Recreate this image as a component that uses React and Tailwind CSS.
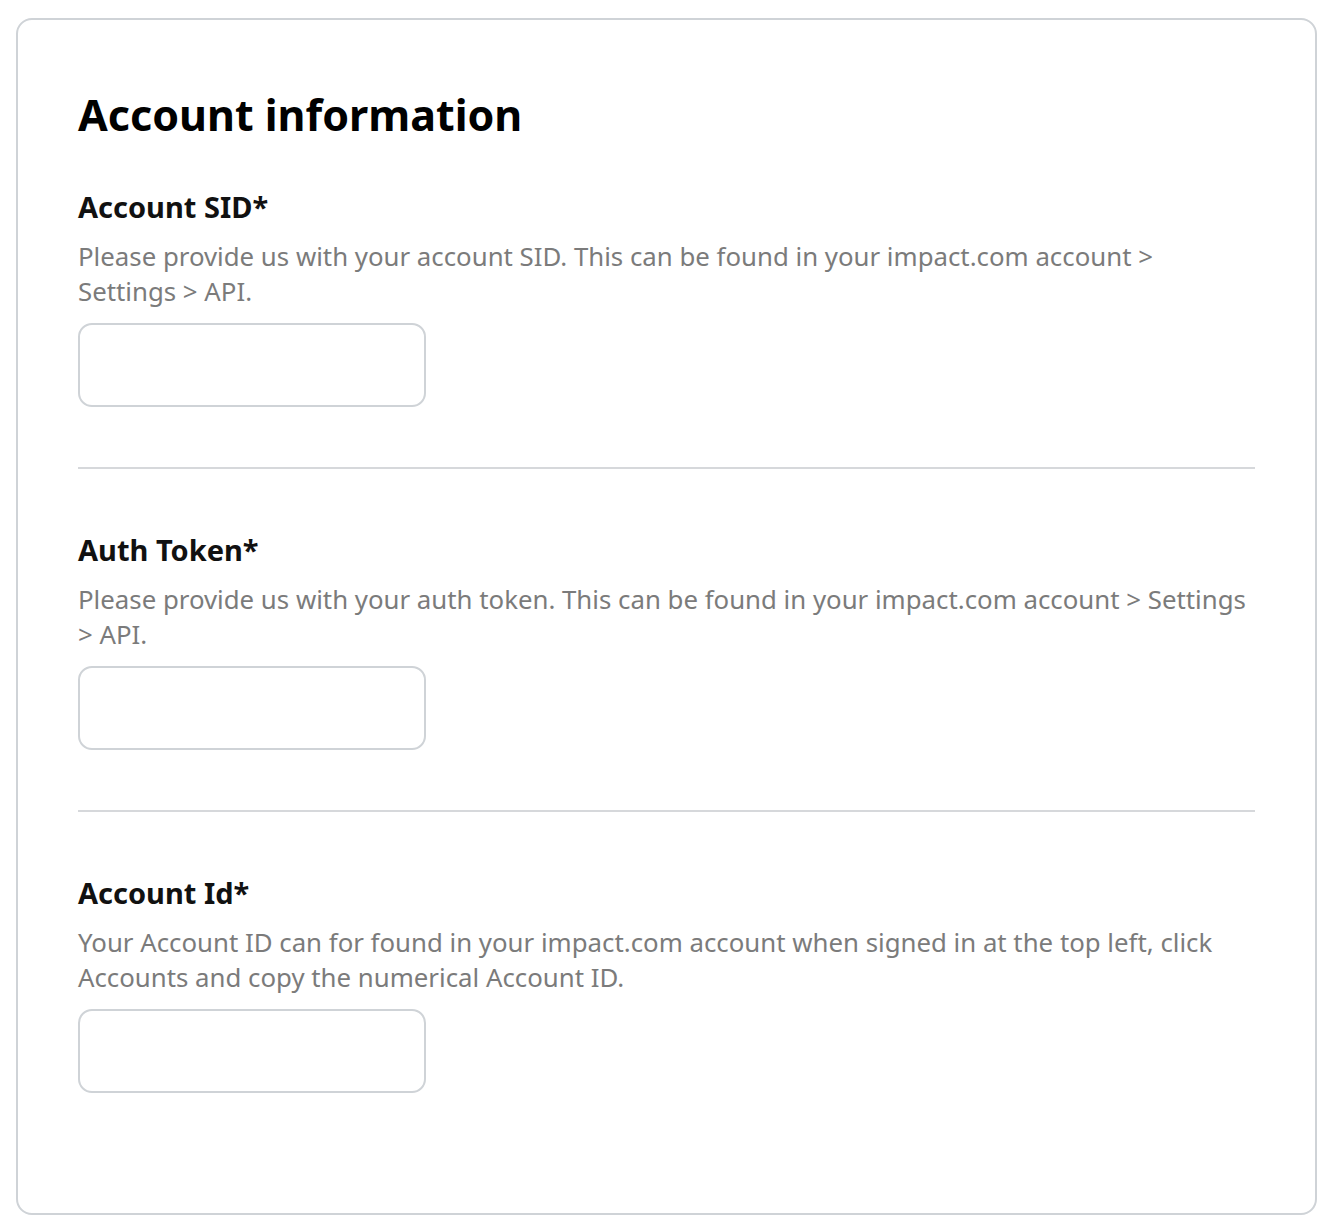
import React from 'react'

const fields = [
    {
        label: 'Account SID*',
        help: [
            'Please provide us with your account SID. This can be found in your impact.com account >',
            'Settings > API.',
        ],
    },
    {
        label: 'Auth Token*',
        help: [
            'Please provide us with your auth token. This can be found in your impact.com account > Settings',
            '> API.',
        ],
    },
    {
        label: 'Account Id*',
        help: [
            'Your Account ID can for found in your impact.com account when signed in at the top left, click',
            'Accounts and copy the numerical Account ID.',
        ],
    },
]

function Field({ label, help, first }) {
    return (
        <div className={first ? 'pb-[60px]' : 'pt-[63px] pb-[60px]'}>
            <div className="text-[29px] leading-[36px] font-bold text-[#111]">{label}</div>
            <p className="mt-[14px] text-[25.8px] leading-[35px] text-[#7b7b7b] whitespace-nowrap">
                {help.map((line, i) => (
                    <span key={i} className="block">{line}</span>
                ))}
            </p>
            <input
                type="text"
                className="mt-[14px] block w-[348px] h-[84px] border-2 border-[#cfd3d7] rounded-[14px] bg-white outline-none px-4 text-[26px]"
            />
        </div>
    )
}

export default function App() {
    return (
        <div className="bg-white min-h-screen pt-[18px] pb-4 px-4" style={{ fontFamily: '"Noto Sans", Lato, sans-serif' }}>
            <div className="w-[1301px] border-2 border-[#cfd3d7] rounded-[16px] bg-white px-[60px] pt-[66px] pb-[60px]">
                <h1 className="text-[43px] leading-[58px] font-bold text-black mb-[45px]">Account information</h1>
                {fields.map((f, i) => (
                    <div key={f.label}>
                        {i > 0 && <div className="h-[2px] bg-[#d6d8db]" />}
                        <Field {...f} first={i === 0} />
                    </div>
                ))}
            </div>
        </div>
    )
}
